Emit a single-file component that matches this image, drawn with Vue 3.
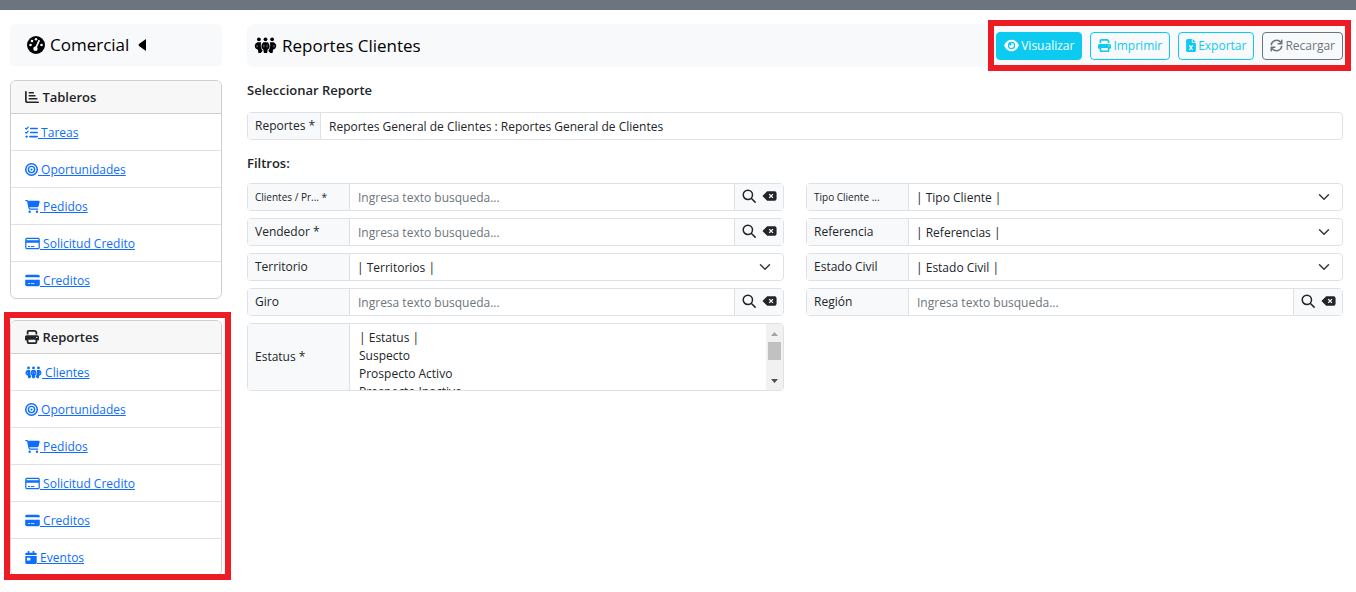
<script setup>
import { ref } from 'vue'

const tableros = [
  { icon: 'tasks', w: 13, label: 'Tareas' },
  { icon: 'target', w: 13, label: 'Oportunidades' },
  { icon: 'cart', w: 15, label: 'Pedidos' },
  { icon: 'card-line', w: 15, label: 'Solicitud Credito' },
  { icon: 'card', w: 15, label: 'Creditos' },
]
const reportes = [
  { icon: 'people', w: 17, label: 'Clientes' },
  ...tableros.slice(1),
  { icon: 'calendar', w: 12, label: 'Eventos' },
]
const menus = [
  { title: 'Tableros', icon: 'chart', items: tableros, marked: false },
  { title: 'Reportes', icon: 'print', items: reportes, marked: true },
]
const actions = [
  { label: 'Visualizar', icon: 'eye', w: 15, kind: 'solid' },
  { label: 'Imprimir', icon: 'print', w: 13, kind: 'info' },
  { label: 'Exportar', icon: 'excel', w: 10, kind: 'info' },
  { label: 'Recargar', icon: 'sync', w: 13, kind: 'gray' },
]
const left = [
  { id: 'clientes', label: 'Clientes / Pr... *', type: 'search', small: true },
  { id: 'vendedor', label: 'Vendedor *', type: 'search' },
  { id: 'territorio', label: 'Territorio', type: 'select', value: '| Territorios |' },
  { id: 'giro', label: 'Giro', type: 'search' },
  { id: 'estatus', label: 'Estatus *', type: 'list' },
]
const right = [
  { id: 'tipo', label: 'Tipo Cliente ...', type: 'select', value: '| Tipo Cliente |', small: true },
  { id: 'referencia', label: 'Referencia', type: 'select', value: '| Referencias |' },
  { id: 'civil', label: 'Estado Civil', type: 'select', value: '| Estado Civil |' },
  { id: 'region', label: 'Región', type: 'search' },
]
const columns = [left, right]
const estatus = ['| Estatus |', 'Suspecto', 'Prospecto Activo', 'Prospecto Inactivo', 'Cliente Activo', 'Cliente Inactivo']
const reporte = ref('Reportes General de Clientes : Reportes General de Clientes')
</script>

<template>
  <svg class="sprite" aria-hidden="true">
    <symbol id="eye" viewBox="0 0 576 512"><path d="M288 32c-80.800 0-145.500 36.800-192.600 80.600C48.600 156 17.300 208 2.500 243.700c-3.300 7.900-3.300 16.700 0 24.600C17.300 304 48.600 356 95.400 399.400C142.500 443.200 207.200 480 288 480s145.500-36.800 192.600-80.600c46.800-43.500 78.100-95.400 93-131.100c3.300-7.900 3.300-16.700 0-24.600c-14.900-35.700-46.200-87.700-93-131.100C433.500 68.800 368.800 32 288 32zM144 256a144 144 0 1 1 288 0 144 144 0 1 1 -288 0zm144-64c0 35.300-28.700 64-64 64c-7.100 0-13.900-1.200-20.300-3.300c-5.500-1.800-11.900 1.600-11.700 7.400c.3 6.900 1.300 13.800 3.200 20.700c13.700 51.200 66.400 81.600 117.600 67.900s81.600-66.400 67.900-117.600c-11.100-41.500-47.800-69.400-88.600-71.100c-5.800-.2-9.200 6.100-7.400 11.700c2.100 6.400 3.300 13.200 3.300 20.300z" /></symbol>
    <symbol id="print" viewBox="0 0 512 512"><path d="M128 0C92.700 0 64 28.700 64 64v96h64V64H354.700L384 93.300V160h64V93.300c0-17-6.700-33.300-18.700-45.300L400 18.700C388 6.700 371.700 0 354.700 0H128zM384 352v96H128V352H384zm64 32h32c17.700 0 32-14.300 32-32V256c0-35.300-28.700-64-64-64H64c-35.300 0-64 28.700-64 64v96c0 17.700 14.300 32 32 32H64v64c0 35.300 28.700 64 64 64H384c35.300 0 64-28.700 64-64V384zM432 248a24 24 0 1 1 0 48 24 24 0 1 1 0-48z" /></symbol>
    <symbol id="excel" viewBox="0 0 384 512"><path d="M64 0C28.700 0 0 28.700 0 64V448c0 35.300 28.700 64 64 64H320c35.300 0 64-28.700 64-64V160H256c-17.700 0-32-14.300-32-32V0H64zM256 0V128H384L256 0zM155.700 250.200L192 302.100l36.300-51.900c7.600-10.900 22.600-13.500 33.400-5.900s13.500 22.600 5.900 33.400L221.300 344l46.400 66.200c7.600 10.900 5 25.800-5.900 33.400s-25.800 5-33.400-5.900L192 385.800l-36.300 51.900c-7.600 10.900-22.600 13.500-33.400 5.900s-13.500-22.600-5.900-33.400L162.700 344l-46.400-66.200c-7.600-10.900-5-25.800 5.900-33.400s25.800-5 33.400 5.900z" /></symbol>
    <symbol id="sync" viewBox="0 0 512 512"><path d="M50 220A212 212 0 0 1 420 125M462 292A212 212 0 0 1 92 387M462 50V190H322M50 462V322H190" fill="none" stroke="currentColor" stroke-width="62" stroke-linecap="round" stroke-linejoin="round" /></symbol>
    <symbol id="cart" viewBox="0 0 576 512"><path d="M0 24C0 10.700 10.700 0 24 0H69.500c22 0 41.500 12.800 50.600 32h411c26.300 0 45.500 25 38.600 50.400l-41 152.300c-8.500 31.400-37 53.300-69.500 53.300H170.700l5.400 28.500c2.200 11.300 12.100 19.500 23.600 19.500H488c13.300 0 24 10.700 24 24s-10.700 24-24 24H199.700c-34.600 0-64.300-24.600-70.700-58.500L77.400 54.500c-.7-3.800-4-6.500-7.900-6.500H24C10.700 48 0 37.300 0 24zM128 464a48 48 0 1 1 96 0 48 48 0 1 1 -96 0zm336-48a48 48 0 1 1 0 96 48 48 0 1 1 0-96z" /></symbol>
    <symbol id="tasks" viewBox="0 0 512 512"><path d="M20 90L55 125L125 42M20 250L55 285L125 202" fill="none" stroke="currentColor" stroke-width="46" stroke-linecap="round" stroke-linejoin="round" /><path d="M224 96H480M224 256H480M192 416H480" stroke="currentColor" stroke-width="64" stroke-linecap="round" /><circle cx="64" cy="416" r="46" /></symbol>
    <symbol id="target" viewBox="0 0 512 512"><g fill="none" stroke="currentColor"><circle cx="256" cy="256" r="226" stroke-width="60" /><circle cx="256" cy="256" r="122" stroke-width="56" /></g><circle cx="256" cy="256" r="42" /></symbol>
    <symbol id="card-line" viewBox="0 0 576 512"><path fill-rule="evenodd" d="M64 32H512a64 64 0 0 1 64 64V416a64 64 0 0 1-64 64H64a64 64 0 0 1-64-64V96A64 64 0 0 1 64 32ZM64 80a16 16 0 0 0-16 16v32H528V96a16 16 0 0 0-16-16ZM48 224V416a16 16 0 0 0 16 16H512a16 16 0 0 0 16-16V224ZM112 350h80v46h-80ZM224 350h140v46H224Z" /></symbol>
    <symbol id="card" viewBox="0 0 576 512"><path fill-rule="evenodd" d="M64 32H512a64 64 0 0 1 64 64v32H0V96A64 64 0 0 1 64 32ZM0 224H576V416a64 64 0 0 1-64 64H64a64 64 0 0 1-64-64ZM112 350h80v34h-80ZM224 350h140v34H224Z" /></symbol>
    <symbol id="calendar" viewBox="0 0 448 512"><path fill-rule="evenodd" d="M96 0h64v64H288V0h64v64h48a48 48 0 0 1 48 48v48H0v-48A48 48 0 0 1 48 64H96ZM0 192H448V464a48 48 0 0 1-48 48H48a48 48 0 0 1-48-48ZM64 264V376h136V264Z" /></symbol>
    <symbol id="chart" viewBox="0 0 512 512"><path d="M32 64V384a64 64 0 0 0 64 64H480M160 100H300M160 210H360M160 320H430" fill="none" stroke="currentColor" stroke-width="62" stroke-linecap="round" /></symbol>
    <symbol id="people" viewBox="0 0 24 18"><circle cx="5" cy="2.500" r="2" /><circle cx="12" cy="2.500" r="2" /><circle cx="19" cy="2.500" r="2" /><path d="M3.500 5.500H7.500C6.500 9 7 12 9 14.500L7 17H4.500L4 13.500C-.8 12 0 7 3.500 5.500ZM20.500 5.500H16.500C17.500 9 17 12 15 14.500L17 17h2.500L20 13.500C24.800 12 24 7 20.500 5.500ZM9.800 5.500h4.400C17.500 8.500 16.500 12.200 14.300 13.200L13.700 17H10.300L9.700 13.200C7.500 12.200 6.500 8.500 9.800 5.500Z" /><path d="M10.300 8v3M13.700 8v3M3 8.500v2.500M21 8.500v2.500" stroke="#fff" stroke-width=".5" /></symbol>
    <symbol id="gauge" viewBox="0 0 18 18"><circle cx="9" cy="9" r="9" /><g fill="#f8f9fa"><circle cx="3.500" cy="9" r="1.300" /><circle cx="5" cy="5" r="1.300" /><circle cx="9" cy="3.300" r="1.300" /><circle cx="14.500" cy="9" r="1.300" /><circle cx="8.500" cy="12.700" r="2.200" /></g><path d="M8.500 12.500L12 4.800" stroke="#f8f9fa" stroke-width="1.800" stroke-linecap="round" /></symbol>
    <symbol id="search" viewBox="0 0 16 16"><path d="M15 15L10.800 10.800M12 6.700A5.300 5.300 0 1 1 1.400 6.700A5.300 5.300 0 0 1 12 6.700Z" fill="none" stroke="currentColor" stroke-width="1.700" stroke-linecap="round" /></symbol>
    <symbol id="clear" viewBox="0 0 16 12"><path d="M5.500 1H13.500A2 2 0 0 1 15.500 3V9A2 2 0 0 1 13.500 11H5.500L.5 6Z" /><path d="M7.700 4L11.700 8M11.700 4L7.700 8" stroke="#f8f9fa" stroke-width="1.500" /></symbol>
  </svg>

  <div class="topbar"></div>
  <div class="page">
    <aside class="side">
      <header class="brand">
        <svg class="gauge"><use href="#gauge" /></svg>
        <span>Comercial</span>
        <svg class="caret" viewBox="0 0 8 12"><path d="M8 0V12L1 7Q0 6 1 5Z" /></svg>
      </header>
      <nav v-for="m in menus" :key="m.title" class="card" :class="{ marked: m.marked }">
        <h2><svg class="icon" width="14" height="14"><use :href="'#' + m.icon" /></svg> {{ m.title }}</h2>
        <ul>
          <li v-for="i in m.items" :key="i.label">
            <a href="#"><svg class="icon" :width="i.w" height="13"><use :href="'#' + i.icon" /></svg> {{ i.label }}</a>
          </li>
        </ul>
      </nav>
    </aside>

    <main>
      <header class="head">
        <h1><svg class="crowd"><use href="#people" /></svg>Reportes Clientes</h1>
        <div class="actions marked">
          <button v-for="a in actions" :key="a.label" type="button" :class="a.kind">
            <svg :width="a.w" height="13"><use :href="'#' + a.icon" /></svg>{{ a.label }}
          </button>
        </div>
      </header>

      <h3>Seleccionar Reporte</h3>
      <div class="group">
        <label class="auto" for="reporte">Reportes *</label>
        <input id="reporte" v-model="reporte" type="text">
      </div>

      <h3 class="filters">Filtros:</h3>
      <div class="columns">
        <div v-for="(col, c) in columns" :key="c" class="column">
          <div v-for="f in col" :key="f.id" class="group" :class="{ tall: f.type === 'list' }">
            <label :for="f.id" :class="{ small: f.small }">{{ f.label }}</label>
            <template v-if="f.type === 'search'">
              <input :id="f.id" type="text" placeholder="Ingresa texto busqueda...">
              <div class="tools">
                <button type="button" aria-label="Buscar"><svg width="14" height="14"><use href="#search" /></svg></button>
                <button type="button" aria-label="Borrar"><svg width="15" height="12"><use href="#clear" /></svg></button>
              </div>
            </template>
            <div v-else-if="f.type === 'select'" class="pick">
              <select :id="f.id"><option>{{ f.value }}</option></select>
              <svg viewBox="0 0 16 16"><path d="M2 5l6 6 6-6" /></svg>
            </div>
            <template v-else>
              <select :id="f.id" class="list" multiple>
                <option v-for="o in estatus" :key="o">{{ o }}</option>
              </select>
              <div class="bar" aria-hidden="true">
                <svg class="dim" viewBox="0 0 7 4"><path d="M0 4L3.500 0L7 4Z" /></svg>
                <i></i>
                <svg viewBox="0 0 7 4"><path d="M0 0L3.500 4L7 0Z" /></svg>
              </div>
            </template>
          </div>
        </div>
      </div>
    </main>
  </div>
</template>

<style>
body {
  margin: 0;
  background: #fff;
}
</style>

<style scoped>
* {
  box-sizing: border-box;
}
.sprite {
  position: absolute;
  width: 0;
  height: 0;
}
svg {
  fill: currentColor;
  flex: none;
}
.topbar {
  height: 10px;
  background: #6c757d;
}
.page {
  display: grid;
  grid-template-columns: 212px minmax(0, 1fr);
  gap: 25px;
  padding: 14px 13px 12px 10px;
  font: 12px/18px "Open Sans", "Noto Sans", sans-serif;
  color: #212529;
}
button,
input,
select {
  font: inherit;
  color: inherit;
}
.brand {
  display: flex;
  align-items: center;
  height: 42px;
  padding: 0 17px;
  margin-bottom: 14px;
  border-radius: 6px;
  background: #f8f9fa;
  color: #000;
  font-size: 17px;
}
.gauge {
  width: 18px;
  height: 18px;
  margin-right: 5px;
}
.caret {
  width: 8px;
  height: 12px;
  margin-left: 9px;
}
.card {
  position: relative;
  border: 1px solid #cfcfcf;
  border-radius: 6px;
  margin-bottom: 21px;
}
.card.marked {
  margin-bottom: 0;
}
.marked::after {
  content: "";
  position: absolute;
  border: 6px solid #ed1c24;
  pointer-events: none;
}
.card.marked::after {
  inset: -9px -10px -5px -7px;
}
.card h2 {
  margin: 0;
  padding: 7px 14px;
  border-bottom: 1px solid #cfcfcf;
  border-radius: 5px 5px 0 0;
  background: #f7f7f7;
  font-size: 13px;
  line-height: 18px;
  font-weight: 600;
}
.icon {
  vertical-align: -2px;
}
ul {
  list-style: none;
  margin: 0;
  padding: 0;
}
li {
  padding: 10px 14px 8px;
}
li + li {
  border-top: 1px solid #dee2e6;
}
a {
  color: #0d6efd;
  text-decoration: underline;
}
.head {
  display: flex;
  align-items: center;
  justify-content: space-between;
  height: 43px;
  padding-left: 7px;
  border-radius: 6px;
  background: #f8f9fa;
}
h1 {
  display: flex;
  align-items: center;
  gap: 5px;
  margin: 0;
  color: #000;
  font-size: 17px;
  font-weight: 400;
}
.crowd {
  width: 23px;
  height: 17px;
}
.actions {
  position: relative;
  display: flex;
  gap: 8px;
}
.actions::after {
  inset: -12px -8px -11px -8px;
}
.actions button {
  display: flex;
  align-items: center;
  gap: 2px;
  height: 28px;
  padding: 0 7px;
  border: 1px solid currentColor;
  border-radius: 4px;
  background: transparent;
}
.actions .solid {
  border-color: #0dcaf0;
  background: #0dcaf0;
  color: #fff;
}
.actions .info {
  color: #0dcaf0;
}
.actions .gray {
  color: #6c757d;
}
h3 {
  margin: 14px 0 13px;
  font-size: 13px;
  line-height: 18px;
  font-weight: 600;
}
.filters {
  margin-bottom: 11px;
}
.group {
  display: flex;
  height: 28px;
  border: 1px solid #dee2e6;
  border-radius: 4px;
}
.group label {
  display: flex;
  align-items: center;
  flex: none;
  width: 102px;
  padding: 0 7px;
  border-right: 1px solid #dee2e6;
  background: #f8f9fa;
  white-space: nowrap;
}
.group label.auto {
  width: 73px;
}
.group label.small {
  font-size: 10px;
}
.group input {
  flex: 1;
  min-width: 0;
  border: 0;
  padding: 1px 8px 0;
  background: none;
}
input::placeholder {
  color: #6c757d;
  opacity: 1;
}
.columns {
  display: grid;
  grid-template-columns: 1fr 1fr;
  gap: 22px;
}
.column {
  display: flex;
  flex-direction: column;
  gap: 7px;
}
.tools {
  display: flex;
  align-items: center;
  gap: 6px;
  padding: 0 6px 2px 7px;
  border-left: 1px solid #dee2e6;
  background: #f8f9fa;
}
.tools button {
  display: flex;
  padding: 0;
  border: 0;
  background: none;
}
.pick {
  position: relative;
  flex: 1;
}
.pick select {
  appearance: none;
  width: 100%;
  height: 100%;
  padding: 1px 7px 0;
  border: 0;
  background: transparent;
}
.pick svg {
  position: absolute;
  right: 12px;
  top: 7px;
  width: 12px;
  height: 12px;
  fill: none;
  stroke: #343a40;
  stroke-width: 2;
  stroke-linecap: round;
  stroke-linejoin: round;
  pointer-events: none;
}
.group.tall {
  height: 68px;
}
.list {
  flex: 1;
  height: 100%;
  padding: 5px 7px 4px;
  border: 0;
  outline: 0;
  background: none;
  scrollbar-width: none;
}
.list option {
  min-height: 18px;
  padding: 0 2px;
  line-height: 18px;
}
.bar {
  display: flex;
  flex-direction: column;
  align-items: center;
  width: 17px;
  padding: 8px 0 7px;
  background: #f1f1f1;
  color: #505050;
}
.bar svg {
  width: 7px;
  height: 4px;
}
.bar .dim {
  color: #a3a3a3;
}
.bar i {
  width: 13px;
  height: 18px;
  margin: 6px 0 auto;
  background: #c1c1c1;
}
</style>
